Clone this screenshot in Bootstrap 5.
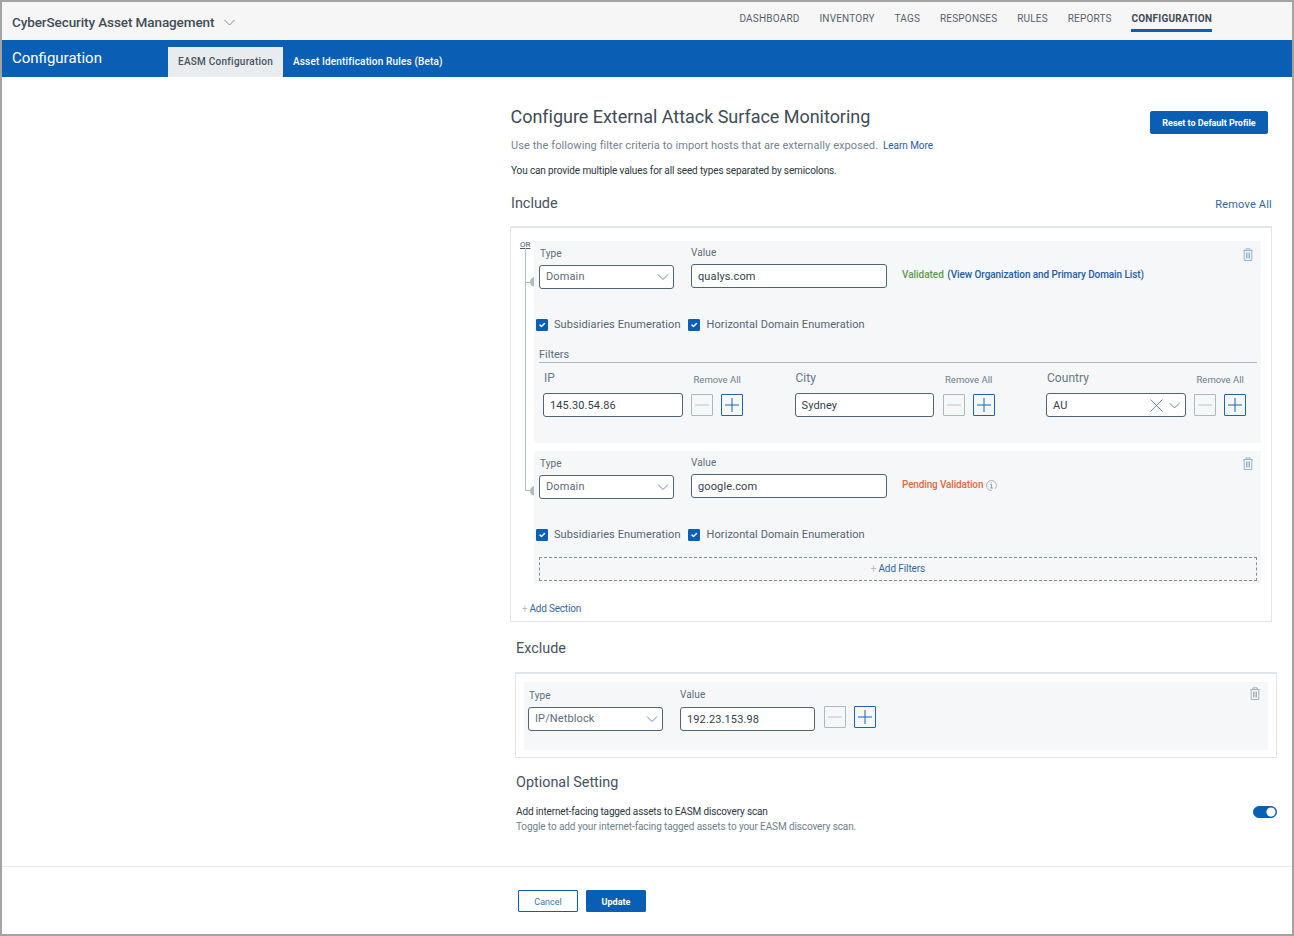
<!DOCTYPE html>
<html lang="en">
<head>
<meta charset="utf-8">
<title>Configuration</title>
<link href="https://cdn.jsdelivr.net/npm/bootstrap@5.3.0/dist/css/bootstrap.min.css" rel="stylesheet">
<style>
html,body{height:100%;margin:0;overflow:hidden}
body{font-family:Roboto,"Liberation Sans",sans-serif;background:#fff;color:#3c4a56}
.frame{height:936px;border:2px solid #a3a3a3;display:flex;flex-direction:column}
.topbar{height:38px;background:#f6f6f6;padding:0 80px 0 10px;align-items:flex-start;flex-wrap:nowrap}
.brand{font-size:13.5px;font-weight:500;color:#414d58;line-height:16px;margin-top:12px;letter-spacing:-.1px}
.brand svg{margin-left:10px;vertical-align:1px}
.topnav{gap:19.8px;flex-wrap:nowrap}
.topnav .nav-link{padding:10px 0 0;font-size:10px;line-height:13px;letter-spacing:.2px;color:#55626d;border-bottom:3px solid transparent;box-sizing:content-box;height:17px}
.topnav .nav-link.active{color:#3f4b56;font-weight:700;border-bottom-color:#0a5fb4}
.band{height:37px;background:#0a5fb4;padding-left:10px}
.band-title{width:156px;color:#fff;font-size:15px;line-height:36px}
.band .nav-link{height:30px;margin-top:7px;padding:0 10px;font-size:10px;font-weight:500;line-height:30px;letter-spacing:.16px;color:#fff;border-radius:0}
.band .nav-link.active{background:#e8ecef;color:#46525d;letter-spacing:.25px}
.main{flex:1 1 auto;padding-left:508px;padding-right:15px;min-height:0}
.head{display:flex;justify-content:space-between;align-items:flex-start;padding-right:9px}
.title{font-size:18px;font-weight:400;line-height:24px;margin:28px 0 0 .5px;color:#3f4b56;letter-spacing:-.03px}
.btn-reset{margin-top:34px}
.btn-blue{background:#0a5fb4;border:1px solid #0a5fb4;color:#fff;font-size:9px;font-weight:700;border-radius:2px;padding:0;height:23px;line-height:22px}
.btn-reset{width:118px;letter-spacing:-.03px}
.sub{font-size:11px;line-height:14px;margin:0 0 0 1px;color:#74838f;letter-spacing:.08px;padding-top:5px}
.sub a{font-size:10px;color:#1f5da6;text-decoration:none;margin-left:2px;letter-spacing:-.05px}
.note{font-size:10px;line-height:14px;margin:11px 0 0 1px;color:#2b3640;letter-spacing:-.12px}
.h-sec{font-size:14.4px;font-weight:400;line-height:18px;color:#46525d;margin:0}
.inc-head{display:flex;justify-content:space-between;align-items:flex-end;margin:15px 5px 0 1px;height:19px}
.inc-head .h-sec{margin-bottom:-1px}
.link-rm{font-size:11px;color:#32689f;text-decoration:none;line-height:14px;letter-spacing:.2px}
.box{position:relative;width:762px;border:1px solid #e1e6ea;border-width:2px 1px 1px 1px}
.box-inc{height:396px;margin-top:14px;padding:13px 10px 0 23px}
.sec{position:relative;background:#f5f7f9;padding-left:5px;padding-right:4px}
.sec1{height:202px}
.sec2{height:133px;margin-top:8px}
.row-a{display:flex;align-items:flex-start}
.fld{flex:none}
.fld label,.lbl{display:block;font-size:10px;line-height:12px;color:#5e6d79;letter-spacing:.1px}
.w135{width:135px}
.w196{width:196px}
.form-control.ctl,.form-select.ctl{height:24px;min-height:0;padding:0 6px;font-size:11px;line-height:22px;border:1px solid #4f6474;border-radius:3px;color:#33404b;letter-spacing:.12px;background-color:#fff;box-shadow:none}
.form-select.ctl{color:#5c6c79;padding-right:20px;background-size:12px 8px;background-position:right 4px center;background-image:url("data:image/svg+xml,%3csvg xmlns='http://www.w3.org/2000/svg' viewBox='0 0 12 8'%3e%3cpath fill='none' stroke='%233d72ab' stroke-width='.8' d='M1 1.5 6 6.5 11 1.5'/%3e%3c/svg%3e")}
.ty{padding-top:7px}
.ty label{margin-bottom:5px;margin-left:1px}
.va{padding-top:6px;margin-left:17px}
.va label{margin-bottom:5px}
.st{margin-left:15px;padding-top:27px;font-size:10px;line-height:13px;white-space:nowrap}
.st-ok{color:#5f9a4c;font-weight:500;letter-spacing:-.03px}
.st-link{color:#1f5da6;font-weight:500;margin-left:1px;text-decoration:none;letter-spacing:-.1px}
.st-pend{color:#e4693a;font-weight:500;letter-spacing:-.15px}
.trash{position:absolute;right:8.5px;top:7px}
.sec2 .trash{top:6px}
.checks{display:flex;align-items:center;margin:29px 0 0 -3px;height:14px}
.form-check-input.ck{width:12px;height:12px;margin:-1px 6px 0 0;border-radius:1px;background-color:#0a5fb4;border-color:#0a5fb4;background-size:10px}
.ck-lbl{font-size:11px;line-height:14px;color:#56646f;letter-spacing:.08px}
.ck-lbl + .ck{margin-left:7px;margin-right:7px}
.filt-h{font-size:11px;line-height:14px;color:#5e6d79;margin-top:16px;border-bottom:1px solid #a8b8c2}
.filt{display:flex;padding-top:9px}
.fcol{flex:none;width:251.5px;padding-left:4px}
.fcol .ftop{display:flex;height:21px;align-items:flex-start}
.fcol .fname{font-size:12px;line-height:14px;color:#6a7884;width:150.5px;letter-spacing:.05px;padding-left:1px;margin-top:-1px}
.fcol .frm{font-size:9.5px;line-height:12px;color:#6f7d88;padding-top:2px;white-space:nowrap}
.fline{display:flex;align-items:flex-start}
.fline>.ctl,.cty{width:139.5px;flex:none}
.sq{flex:none;width:22px;height:22px;padding:0;display:flex;align-items:center;justify-content:center;border-radius:1px;background:transparent}
.sq-off{border:1px solid #a9b9c2;margin-left:8.5px;margin-top:1px}
.sq-on{border:1px solid #1767b5;margin-left:8px;margin-top:1px}
.form-control.ctl.cty{display:flex;align-items:center;justify-content:space-between;padding-top:1px}
.cty .ic{display:flex;gap:6px;align-items:center;margin-right:-1px;margin-top:-1px}
.dash{margin-top:15px;height:24px;border:1px dashed #7f8f9b;font-size:10px;line-height:22px;text-align:center;color:#33689f;letter-spacing:-.1px}
.add-p{color:#c9b5bd;font-size:10px;margin-right:2px}
.add-sec{font-size:10px;line-height:14px;color:#33689f;margin:18px 0 0 -12px;letter-spacing:-.2px}
.rail{position:absolute;left:14px;top:20px;width:1px;height:243px;background:#aebcc6}
.stub{position:absolute;left:14px;width:6px;height:1px;background:#aebcc6}
.knob{position:absolute;left:19px;width:5px;height:10px;background:#aebcc6;border-radius:5px 0 0 5px}
.or{position:absolute;left:9px;top:12px;font-size:8px;line-height:9px;color:#4a5863;text-decoration:underline}
.h-ex{margin:18px 0 0 6px}
.box-ex{height:86px;margin:14px 0 0 5px;padding:8px 8px 0 8px}
.sec3{height:68px;background:#f5f7f9;padding-left:4px;position:relative}
.sec3 .trash{top:5px}
.sec3 .row-a{padding-top:1px}
.sec3 .fld+.fld{padding-top:6px}
.sec3 .fld+.fld label{margin-left:0;margin-bottom:6px}
.opt{margin:16px 0 0 6px}
.opt-row{display:flex;justify-content:space-between;align-items:flex-start;margin:13px 0 0 6px}
.opt-a{font-size:10px;line-height:14px;color:#2b3640;letter-spacing:-.14px}
.opt-b{font-size:10px;line-height:15px;color:#6e7f8c;letter-spacing:-.11px}
.form-check-input.tg{width:24px;height:12px;margin:1px 0 0 0;border-radius:6px;background-color:#0a5fb4;border-color:#0a5fb4;float:none;background-position:right center;background-image:url("data:image/svg+xml,%3csvg xmlns='http://www.w3.org/2000/svg' viewBox='-4 -4 8 8'%3e%3ccircle r='3.7' fill='%23fff'/%3e%3c/svg%3e")}
.form-switch{padding:0;min-height:0;margin:0}
.foot{height:68px;border-top:1px solid #e7ebee;padding:23px 0 0 516px;display:flex;gap:8px;align-items:flex-start}
.foot .btn{width:60px;height:22px;font-size:9px;padding:0;line-height:22px;border-radius:1px}
.btn-cancel{background:#fff;border:1px solid #0a5fb4;color:#3e74ae}
</style>
</head>
<body>
<div class="frame">
  <nav class="navbar topbar d-flex justify-content-between">
    <div class="brand">CyberSecurity Asset Management<svg width="11" height="7" viewBox="0 0 11 7"><path fill="none" stroke="#5c86b5" stroke-width=".9" d="M.5 1 5.5 6 10.5 1"/></svg></div>
    <div class="nav topnav">
      <a class="nav-link" href="#">DASHBOARD</a>
      <a class="nav-link" href="#">INVENTORY</a>
      <a class="nav-link" href="#">TAGS</a>
      <a class="nav-link" href="#">RESPONSES</a>
      <a class="nav-link" href="#">RULES</a>
      <a class="nav-link" href="#">REPORTS</a>
      <a class="nav-link active" href="#">CONFIGURATION</a>
    </div>
  </nav>
  <div class="band d-flex">
    <div class="band-title">Configuration</div>
    <div class="nav">
      <a class="nav-link active" href="#">EASM Configuration</a>
      <a class="nav-link" href="#">Asset Identification Rules (Beta)</a>
    </div>
  </div>
  <main class="main">
    <div class="head">
      <h1 class="title">Configure External Attack Surface Monitoring</h1>
      <button class="btn btn-blue btn-reset" type="button">Reset to Default Profile</button>
    </div>
    <p class="sub">Use the following filter criteria to import hosts that are externally exposed. <a href="#">Learn More</a></p>
    <p class="note">You can provide multiple values for all seed types separated by semicolons.</p>
    <div class="inc-head">
      <h2 class="h-sec">Include</h2>
      <a class="link-rm" href="#">Remove All</a>
    </div>
    <div class="box box-inc">
      <span class="or">OR</span>
      <span class="rail"></span>
      <span class="stub" style="top:54px"></span><span class="knob" style="top:49px"></span>
      <span class="stub" style="top:262px"></span><span class="knob" style="top:258px"></span>
      <section class="sec sec1">
        <svg class="trash" width="10" height="13" viewBox="0 0 10 13"><path fill="none" stroke="#8db5d6" d="M.5 2.5h9M3 2.5V.8h4v1.7M1.2 2.5v10h7.6v-10M3.5 4.5v6M5 4.5v6M6.5 4.5v6"/></svg>
        <div class="row-a">
          <div class="fld w135 ty"><label>Type</label><select class="form-select ctl"><option>Domain</option></select></div>
          <div class="fld w196 va"><label>Value</label><input class="form-control ctl" value="qualys.com"></div>
          <div class="st"><span class="st-ok">Validated</span> <a class="st-link" href="#">(View Organization and Primary Domain List)</a></div>
        </div>
        <div class="checks">
          <input class="form-check-input ck" type="checkbox" checked><span class="ck-lbl">Subsidiaries Enumeration</span>
          <input class="form-check-input ck" type="checkbox" checked><span class="ck-lbl">Horizontal Domain Enumeration</span>
        </div>
        <div class="filt-h">Filters</div>
        <div class="filt">
          <div class="fcol">
            <div class="ftop"><span class="fname">IP</span><span class="frm">Remove All</span></div>
            <div class="fline"><input class="form-control ctl" value="145.30.54.86">
              <button class="sq sq-off" type="button"><svg width="14" height="2" viewBox="0 0 14 2"><path stroke="#b8c6cf" d="M0 1h14"/></svg></button>
              <button class="sq sq-on" type="button"><svg width="14" height="14" viewBox="0 0 14 14"><path stroke="#1767b5" d="M0 7h14M7 0v14"/></svg></button></div>
          </div>
          <div class="fcol">
            <div class="ftop"><span class="fname">City</span><span class="frm">Remove All</span></div>
            <div class="fline"><input class="form-control ctl" value="Sydney">
              <button class="sq sq-off" type="button"><svg width="14" height="2" viewBox="0 0 14 2"><path stroke="#b8c6cf" d="M0 1h14"/></svg></button>
              <button class="sq sq-on" type="button"><svg width="14" height="14" viewBox="0 0 14 14"><path stroke="#1767b5" d="M0 7h14M7 0v14"/></svg></button></div>
          </div>
          <div class="fcol">
            <div class="ftop"><span class="fname">Country</span><span class="frm">Remove All</span></div>
            <div class="fline"><div class="form-control ctl cty"><span>AU</span><span class="ic"><svg width="13" height="13" viewBox="0 0 13 13"><path fill="none" stroke="#3d72ab" stroke-width=".8" d="M.5.5l12 12M12.5.5l-12 12"/></svg><svg width="11" height="7" viewBox="0 0 11 7"><path fill="none" stroke="#3d72ab" stroke-width=".8" d="M.5 1 5.5 6 10.5 1"/></svg></span></div>
              <button class="sq sq-off" type="button"><svg width="14" height="2" viewBox="0 0 14 2"><path stroke="#b8c6cf" d="M0 1h14"/></svg></button>
              <button class="sq sq-on" type="button"><svg width="14" height="14" viewBox="0 0 14 14"><path stroke="#1767b5" d="M0 7h14M7 0v14"/></svg></button></div>
          </div>
        </div>
      </section>
      <section class="sec sec2">
        <svg class="trash" width="10" height="13" viewBox="0 0 10 13"><path fill="none" stroke="#8db5d6" d="M.5 2.5h9M3 2.5V.8h4v1.7M1.2 2.5v10h7.6v-10M3.5 4.5v6M5 4.5v6M6.5 4.5v6"/></svg>
        <div class="row-a">
          <div class="fld w135 ty"><label>Type</label><select class="form-select ctl"><option>Domain</option></select></div>
          <div class="fld w196 va"><label>Value</label><input class="form-control ctl" value="google.com"></div>
          <div class="st"><span class="st-pend">Pending Validation</span> <svg width="11" height="11" viewBox="0 0 11 11"><circle cx="5.5" cy="5.5" r="5" fill="none" stroke="#a3adb5" stroke-width=".8" stroke-dasharray="22 4" transform="rotate(140 5.5 5.5)"/><path fill="none" stroke="#7f8b94" stroke-width=".8" d="M4.3 4.5h1.2v3.5M4 8h3M5.2 2.3v1"/></svg></div>
        </div>
        <div class="checks">
          <input class="form-check-input ck" type="checkbox" checked><span class="ck-lbl">Subsidiaries Enumeration</span>
          <input class="form-check-input ck" type="checkbox" checked><span class="ck-lbl">Horizontal Domain Enumeration</span>
        </div>
        <div class="dash"><span class="add-p">+</span>Add Filters</div>
      </section>
      <div class="add-sec"><span class="add-p">+</span>Add Section</div>
    </div>
    <h2 class="h-sec h-ex">Exclude</h2>
    <div class="box box-ex">
      <section class="sec3">
        <svg class="trash" width="10" height="13" viewBox="0 0 10 13"><path fill="none" stroke="#a8aeb4" d="M.5 2.5h9M3 2.5V.8h4v1.7M1.2 2.5v10h7.6v-10M3.5 4.5v6M5 4.5v6M6.5 4.5v6"/></svg>
        <div class="row-a">
          <div class="fld w135 ty"><label>Type</label><select class="form-select ctl"><option>IP/Netblock</option></select></div>
          <div class="fld w135 ty" style="margin-left:17px"><label>Value</label><input class="form-control ctl" value="192.23.153.98"></div>
          <div class="d-flex" style="padding-top:22px">
            <button class="sq sq-off" type="button"><svg width="14" height="2" viewBox="0 0 14 2"><path stroke="#b8c6cf" d="M0 1h14"/></svg></button>
            <button class="sq sq-on" type="button"><svg width="14" height="14" viewBox="0 0 14 14"><path stroke="#1767b5" d="M0 7h14M7 0v14"/></svg></button>
          </div>
        </div>
      </section>
    </div>
    <h2 class="h-sec opt">Optional Setting</h2>
    <div class="opt-row">
      <div><div class="opt-a">Add internet-facing tagged assets to EASM discovery scan</div><div class="opt-b">Toggle to add your internet-facing tagged assets to your EASM discovery scan.</div></div>
      <div class="form-check form-switch"><input class="form-check-input tg" type="checkbox" role="switch" checked></div>
    </div>
  </main>
  <footer class="foot">
    <button class="btn btn-cancel" type="button">Cancel</button>
    <button class="btn btn-blue" type="button">Update</button>
  </footer>
</div>
<script src="https://cdn.jsdelivr.net/npm/bootstrap@5.3.0/dist/js/bootstrap.bundle.min.js"></script>
</body>
</html>
